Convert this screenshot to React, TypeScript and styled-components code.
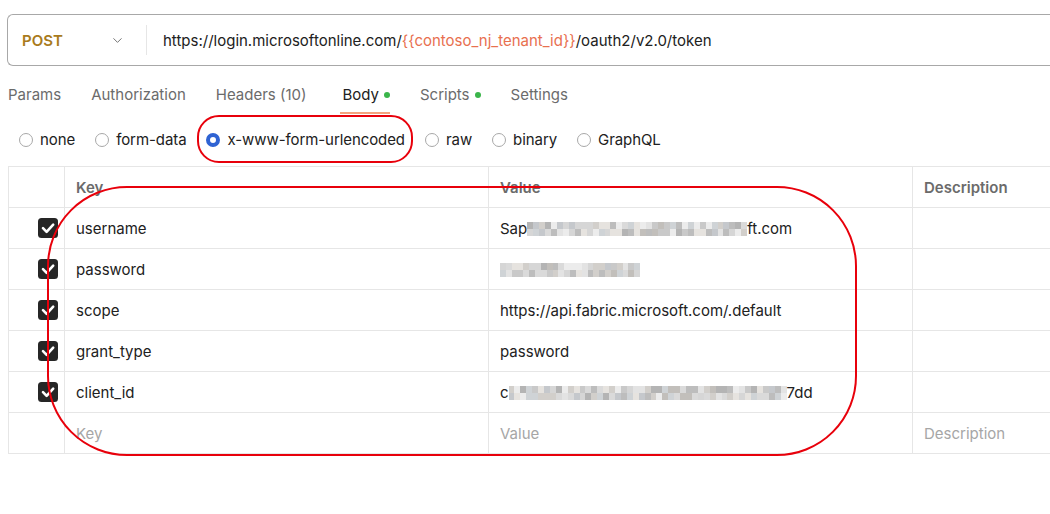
import styled, { createGlobalStyle } from "styled-components";
import { ChevronDown } from "lucide-react";

const COLOR_TEXT = "#212121";
const COLOR_MUTED = "#6b6b6b";
const COLOR_PLACEHOLDER = "#a6a6a6";
const COLOR_BORDER = "#e6e6e6";
const COLOR_ANNOTATION = "#e8000b";

const GlobalStyle = createGlobalStyle`
  html, body {
    margin: 0;
    padding: 0;
    background: #ffffff;
    overflow: hidden;
  }
  body {
    font-family: Inter, "Open Sans", "Liberation Sans", sans-serif;
    font-size: 15px;
    color: ${COLOR_TEXT};
  }
`;

// deterministic grey pixels for the redacted values
const mosaicColors = [
  "#d6d6d6", "#c9c9c9", "#e3e3e3", "#bdbdbd", "#d2cfcb", "#c5c8cc",
  "#dadada", "#b4b4b4", "#e6e3df", "#cfd3d6", "#c2bfbb", "#ececec",
];

const pick = (seed: number, i: number) => {
  const n = Math.abs(Math.sin(seed * 97.3 + i * 12.9898) * 43758.5453);
  return mosaicColors[Math.floor((n - Math.floor(n)) * mosaicColors.length)];
};

interface MosaicProps {
  width: number;
  seed: number;
}

const Mosaic = ({ width, seed }: MosaicProps) => {
  const cols = Math.ceil(width / 6);
  const cells = Array.from({ length: cols * 2 }, (_, i) => pick(seed, i));
  return (
    <MosaicGrid style={{ width, gridTemplateColumns: `repeat(${cols}, 1fr)` }}>
      {cells.map((c, i) => (
        <span key={i} style={{ background: c }} />
      ))}
    </MosaicGrid>
  );
};

const CheckIcon = () => (
  <svg width="20" height="20" viewBox="0 0 20 20">
    <rect x="0" y="0" width="20" height="20" rx="3.5" fill="#262626" />
    <path
      d="M5 10.2 L8.6 13.8 L15.2 6.6"
      fill="none"
      stroke="#ffffff"
      strokeWidth="2.6"
      strokeLinecap="round"
      strokeLinejoin="round"
    />
  </svg>
);

const tabs = [
  { label: "Params" },
  { label: "Authorization" },
  { label: "Headers (10)" },
  { label: "Body", dot: true, active: true },
  { label: "Scripts", dot: true },
  { label: "Settings" },
];

const bodyModes = ["none", "form-data", "x-www-form-urlencoded", "raw", "binary", "GraphQL"];

const App = () => (
  <>
    <GlobalStyle />
    <Page>
      <UrlBar>
        <Method>
          <MethodName>POST</MethodName>
          <ChevronDown size={15} color={COLOR_MUTED} strokeWidth={1.5} />
        </Method>
        <Divider />
        <UrlText>
          https://login.microsoftonline.com/
          <Variable>{"{{contoso_nj_tenant_id}}"}</Variable>
          /oauth2/v2.0/token
        </UrlText>
      </UrlBar>

      <Tabs>
        {tabs.map((t) => (
          <Tab key={t.label} $active={t.active}>
            {t.label}
            {t.dot && <Dot />}
          </Tab>
        ))}
      </Tabs>

      <RadioRow>
        {bodyModes.map((m) => (
          <RadioOption key={m}>
            <Radio $checked={m === "x-www-form-urlencoded"} />
            {m}
          </RadioOption>
        ))}
      </RadioRow>

      <Table>
        <Row>
          <CheckCell />
          <HeadCell>Key</HeadCell>
          <HeadCell>Value</HeadCell>
          <HeadCell>Description</HeadCell>
        </Row>
        <Row>
          <CheckCell><CheckIcon /></CheckCell>
          <Cell>username</Cell>
          <Cell>
            Sap<Mosaic width={220} seed={1} />ft.com
          </Cell>
          <Cell />
        </Row>
        <Row>
          <CheckCell><CheckIcon /></CheckCell>
          <Cell>password</Cell>
          <Cell>
            <Mosaic width={140} seed={2} />
          </Cell>
          <Cell />
        </Row>
        <Row>
          <CheckCell><CheckIcon /></CheckCell>
          <Cell>scope</Cell>
          <Cell>https://api.fabric.microsoft.com/.default</Cell>
          <Cell />
        </Row>
        <Row>
          <CheckCell><CheckIcon /></CheckCell>
          <Cell>grant_type</Cell>
          <Cell>password</Cell>
          <Cell />
        </Row>
        <Row>
          <CheckCell><CheckIcon /></CheckCell>
          <Cell>client_id</Cell>
          <Cell>
            c<Mosaic width={278} seed={3} />7dd
          </Cell>
          <Cell />
        </Row>
        <Row>
          <CheckCell />
          <Cell $placeholder>Key</Cell>
          <Cell $placeholder>Value</Cell>
          <Cell $placeholder>Description</Cell>
        </Row>
      </Table>

      <ModeHighlight />
      <TableHighlight />
    </Page>
  </>
);

export default App;

const Page = styled.div`
  position: relative;
  width: 1050px;
  height: 514px;
  padding: 14px 0 0 8px;
  box-sizing: border-box;
  overflow: hidden;
`;

const UrlBar = styled.div`
  display: flex;
  align-items: center;
  height: 52px;
  margin-left: -1px;
  box-sizing: border-box;
  border: 1px solid #a8a8a8;
  border-right: none;
  border-radius: 6px 0 0 6px;
`;

const Method = styled.div`
  display: flex;
  align-items: center;
  justify-content: space-between;
  width: 124px;
  padding: 0 7px 0 14px;
  box-sizing: border-box;
`;

const MethodName = styled.span`
  color: #a97b1c;
  font-weight: 600;
  font-size: 15px;
`;

const Divider = styled.div`
  width: 1px;
  height: 30px;
  background: ${COLOR_BORDER};
  margin-left: 14px;
`;

const UrlText = styled.div`
  padding-left: 16px;
  font-size: 15px;
  color: ${COLOR_TEXT};
  white-space: nowrap;
`;

const Variable = styled.span`
  color: #e8704f;
`;

const Tabs = styled.div`
  display: flex;
  gap: 30px;
  margin-top: 11px;
`;

const Tab = styled.div<{ $active?: boolean }>`
  display: flex;
  align-items: center;
  gap: 5px;
  padding: 8px 0 7px;
  line-height: 20px;
  font-size: 15px;
  color: ${({ $active }) => ($active ? COLOR_TEXT : COLOR_MUTED)};
  border-bottom: 2px solid ${({ $active }) => ($active ? "#f4a37e" : "transparent")};
  ${({ $active }) => $active && "margin-left: 4px; padding-left: 2px;"}
`;

const Dot = styled.span`
  width: 6px;
  height: 6px;
  border-radius: 50%;
  background: #3bb54a;
`;

const RadioRow = styled.div`
  display: flex;
  align-items: center;
  gap: 20px;
  padding: 16px 0 16px 11px;
  line-height: 20px;
`;

const RadioOption = styled.label`
  display: flex;
  align-items: center;
  gap: 7px;
  font-size: 15px;
  letter-spacing: -0.08px;
  color: ${COLOR_TEXT};
`;

const Radio = styled.span<{ $checked?: boolean }>`
  width: 14px;
  height: 14px;
  box-sizing: border-box;
  border-radius: 50%;
  border: ${({ $checked }) => ($checked ? "4px solid #2f63d3" : "1px solid #a8a8a8")};
  background: #ffffff;
`;

const Table = styled.div`
  display: flex;
  flex-direction: column;
  border-top: 1px solid ${COLOR_BORDER};
  border-left: 1px solid ${COLOR_BORDER};
`;

const Row = styled.div`
  display: grid;
  grid-template-columns: 56px 424px 424px 1fr;
  height: 41px;
  border-bottom: 1px solid ${COLOR_BORDER};
  box-sizing: border-box;
`;

const Cell = styled.div<{ $placeholder?: boolean }>`
  display: flex;
  align-items: center;
  padding-left: 11px;
  border-right: 1px solid ${COLOR_BORDER};
  font-size: 15px;
  white-space: nowrap;
  overflow: hidden;
  color: ${({ $placeholder }) => ($placeholder ? COLOR_PLACEHOLDER : COLOR_TEXT)};

  &:last-child {
    border-right: none;
  }
`;

const HeadCell = styled(Cell)`
  font-weight: 600;
  color: ${COLOR_MUTED};
`;

const CheckCell = styled.div`
  display: flex;
  align-items: center;
  justify-content: flex-end;
  padding-right: 6px;
  border-right: 1px solid ${COLOR_BORDER};
`;

const MosaicGrid = styled.span`
  display: inline-grid;
  grid-template-rows: 7px 7px;
  margin-top: 2px;

  span {
    display: block;
  }
`;

const ModeHighlight = styled.div`
  position: absolute;
  left: 197px;
  top: 115px;
  width: 216px;
  height: 48px;
  box-sizing: border-box;
  border: 2px solid ${COLOR_ANNOTATION};
  border-radius: 22px;
  pointer-events: none;
`;

const TableHighlight = styled.div`
  position: absolute;
  left: 47px;
  top: 186px;
  width: 810px;
  height: 270px;
  box-sizing: border-box;
  border: 2px solid ${COLOR_ANNOTATION};
  border-radius: 80px;
  pointer-events: none;
`;
